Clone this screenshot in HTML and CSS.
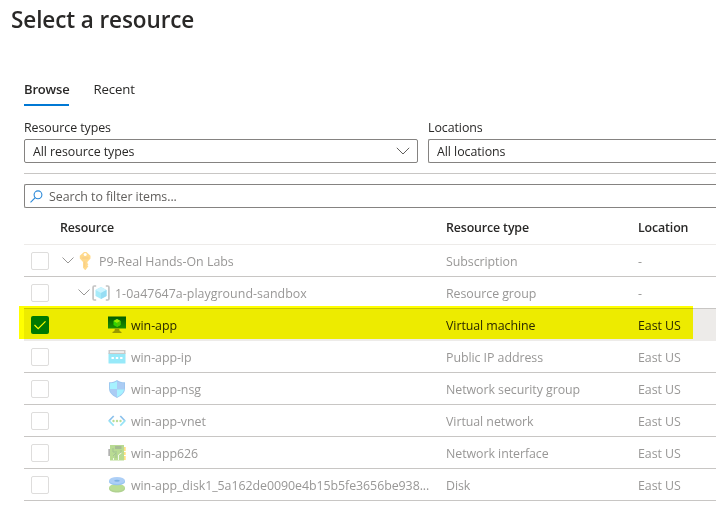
FILE: index.html
```html
<!DOCTYPE html>
<html lang="en">
<head>
<meta charset="utf-8">
<title>Select a resource</title>
<link rel="stylesheet" href="styles.css">
</head>
<body>
<main class="panel">
  <h1 class="title">Select a resource</h1>
  <nav class="tabs">
    <a class="tab active">Browse</a>
    <a class="tab">Recent</a>
  </nav>
  <section class="filters">
    <div class="field types">
      <label class="label">Resource types</label>
      <div class="select"><span>All resource types</span>
        <svg class="caret" width="14" height="8" viewBox="0 0 14 8"><path d="M.8.8 7 7 13.2.8"/></svg>
      </div>
    </div>
    <div class="field locations">
      <label class="label">Locations</label>
      <div class="select open-end"><span>All locations</span></div>
    </div>
  </section>
  <div class="search open-end">
    <svg width="13" height="13" viewBox="0 0 13 13"><circle cx="8" cy="4.800" r="3.900"/><path d="M5.200 7.700.5 12.400"/></svg>
    <span>Search to filter items...</span>
  </div>
  <section class="table">
    <div class="row head"><span></span><span>Resource</span><span>Resource type</span><span>Location</span></div>

    <div class="row dim"><i class="check"></i>
      <div class="name level-0">
        <svg class="chev" width="12" height="7" viewBox="0 0 12 7"><path d="M.5.5 6 6 11.500.5"/></svg>
        <svg class="icon" width="18" height="18" viewBox="0 0 18 18"><path fill="#ffb51a" d="M8 0h2.400l4.100 3.800v2.600L11.400 10v1.200l1 1-1 1 1 1-1 1.200L9.500 18H9l-2-2.200V10L3.800 6.400V3.800z"/><circle cx="9.200" cy="2.600" r="1.500" fill="#fff"/><path fill="#f09a10" d="M5.800 5.600h6.800v1H5.800zM8.300 9.500h.9v5.500h-.9z"/></svg>
        <span class="subscription">P9-Real Hands-On Labs</span></div>
      <span>Subscription</span><span>-</span></div>

    <div class="row dim"><i class="check"></i>
      <div class="name level-1">
        <svg class="chev" width="12" height="7" viewBox="0 0 12 7"><path d="M.5.5 6 6 11.500.5"/></svg>
        <svg class="icon" width="18" height="18" viewBox="0 0 18 18"><path fill="none" stroke="#888" stroke-width="1.700" d="M4.200 2H2.300Q1.100 2 1.100 3.200v11.600q0 1.200 1.200 1.200h1.900M13.800 2h1.900q1.200 0 1.200 1.200v11.600q0 1.200-1.200 1.200h-1.900"/><path fill="#50d8f5" d="m9 3 5.500 3v6L9 15l-5.500-3V6z"/><path fill="#9cebff" d="m9 3 5.500 3L9 9 3.500 6z"/><path fill="#32bdea" d="M9 9v6l5.500-3V6z"/></svg>
        <span class="group">1-0a47647a-playground-sandbox</span></div>
      <span>Resource group</span><span>-</span></div>

    <div class="row selected"><i class="check on"><svg width="18" height="18" viewBox="0 0 18 18"><path d="m3.500 9 3.700 3.700 7.300-7.300"/></svg></i>
      <div class="name level-2">
        <svg class="icon" width="18" height="18" viewBox="0 0 18 18"><defs><linearGradient id="screen" x2="0" y2="1"><stop stop-color="#005ba1"/><stop offset="1" stop-color="#1a90e6"/></linearGradient></defs><path fill="url(#screen)" d="M0 .5h18v12H0z"/><path fill="#32d4d5" d="m9 3 3.500 2v4L9 11 5.500 9V5z"/><path fill="#9cebff" d="m9 3 3.500 2L9 7 5.500 5z"/><path fill="#50c5e5" d="M9 7v4l3.500-2V5z"/><path fill="#999" d="M7 12.500h4q0 3 2.500 3.600v.9h-9v-.9Q7 15.500 7 12.500Z"/></svg>
        <span>win-app</span></div>
      <span>Virtual machine</span><span>East US</span></div>

    <div class="row dim"><i class="check"></i>
      <div class="name level-2">
        <svg class="icon" width="18" height="18" viewBox="0 0 18 18"><path fill="#32d4f5" d="M.5 5h17v10.500H.5z"/><path fill="#949494" d="M.5 2h17v4H.5z"/><path fill="#eee" d="M2 3.200h14v1.600H2z"/><path stroke="#fff" stroke-width="2" d="M3.500 10h2.400M7.800 10h2.400m1.900 0h2.400"/></svg>
        <span>win-app-ip</span></div>
      <span>Public IP address</span><span>East US</span></div>

    <div class="row dim"><i class="check"></i>
      <div class="name level-2">
        <svg class="icon" width="18" height="18" viewBox="0 0 18 18"><path fill="#3c8ee0" d="M9 0c2 1.700 4.500 2.200 8 2.300v6.200C17 13.500 12 16.500 9 18c-3-1.500-8-4.500-8-9.500V2.300C4.500 2.200 7 1.700 9 0Z"/><path fill="#50e6ff" d="M9 1.200v8H1.900V3.200C5.100 3 7 2.400 9 1.200ZM9 9.200h7.100c-.3 3.700-3.900 6.100-7.100 7.800z"/><path fill="#5a9bea" d="M9 1.200v8h7.100V3.200C12.900 3 11 2.400 9 1.200ZM9 9.200H1.900C2.200 12.900 5.800 15.300 9 17z"/></svg>
        <span>win-app-nsg</span></div>
      <span>Network security group</span><span>East US</span></div>

    <div class="row dim"><i class="check"></i>
      <div class="name level-2">
        <svg class="icon" width="18" height="18" viewBox="0 0 18 18"><g fill="none" stroke-width="1.700"><path stroke="#1683d9" d="M5.700 4 .9 9m11.400-5 4.800 5"/><path stroke="#32c9ee" d="m.9 8.700 4.800 5m11.400-5-4.800 5"/></g><g fill="#76bc2d"><circle cx="5.500" cy="9" r="1.200"/><circle cx="9" cy="9" r="1.200"/><circle cx="12.500" cy="9" r="1.200"/></g></svg>
        <span>win-app-vnet</span></div>
      <span>Virtual network</span><span>East US</span></div>

    <div class="row dim"><i class="check"></i>
      <div class="name level-2">
        <svg class="icon" width="18" height="18" viewBox="0 0 18 18"><path fill="#76b82a" d="M2 1h14v15.500H2z"/><path fill="#666" d="M.3 5h1.700v7H.3z"/><path fill="#527a2c" d="M7 2h6.500v3H7z"/><path fill="#ffc400" d="M16 3h1.700v4H16zm0 5h1.700v3H16zm0 4h1.700v4H16z"/><path fill="none" stroke="#4b872b" d="M5 4v4h4M5 12l3-3v5m5-8v3"/><path fill="none" stroke="#e5f2d7" d="M10.500 16v-5l3-2M5.500 16v-2"/></svg>
        <span>win-app626</span></div>
      <span>Network interface</span><span>East US</span></div>

    <div class="row dim"><i class="check"></i>
      <div class="name level-2">
        <svg class="icon" width="18" height="18" viewBox="0 0 18 18"><path fill="#63a525" d="M1 11.500h16v1c0 5.300-16 5.300-16 0z"/><ellipse cx="9" cy="11.500" rx="8" ry="3.500" fill="#76bc2d"/><path fill="#308ce0" d="M1 4.500h16v1c0 5-16 5-16 0z"/><ellipse cx="9" cy="4.500" rx="8" ry="3.500" fill="#5ea0ef"/><ellipse cx="9" cy="4.800" rx="2.800" ry="1" fill="#0068c8"/></svg>
        <span>win-app_disk1_5a162de0090e4b15b5fe3656be938...</span></div>
      <span>Disk</span><span>East US</span></div>
    <div class="marker"></div>
  </section>
</main>
</body>
</html>
```
FILE: styles.css
```css
* { box-sizing: border-box; }
body {
  margin: 0;
  background: #fff;
  color: #292827;
  font: 12.4px/18px "Open Sans", "Noto Sans", sans-serif;
  letter-spacing: -.06px;
}
svg { display: block; flex: none; }
.panel { height: 514px; padding-left: 24px; }
.title {
  margin: 0 0 0 -13px;
  padding-top: 4px;
  height: 78px;
  font-size: 22.5px;
  line-height: 32px;
  font-weight: 600;
  letter-spacing: -.1px;
}
.tabs { display: flex; gap: 24px; height: 41px; }
.tab { height: 28px; padding-top: 2px; font-size: 13.2px; letter-spacing: -.1px; }
.tab.active {
  border-bottom: 2px solid #0078d4;
  font-weight: 600;
  font-size: 13px;
  letter-spacing: -.18px;
}
.filters {
  display: flex;
  gap: 10px;
  height: 55px;
  border-bottom: 1px solid #c8c6c4;
}
.types { flex: none; width: 394px; }
.locations { flex: 1; }
.label { display: block; height: 20px; }
.select, .search {
  display: flex;
  align-items: center;
  height: 24px;
  border: 1px solid #858381;
  border-radius: 2px;
}
.select { justify-content: space-between; padding: 0 7px 0 8px; }
.select span, .search span { padding-top: 1px; }
.caret, .chev { fill: none; stroke: #605e5c; }
.search {
  margin-top: 10px;
  padding-left: 5px;
  gap: 6px;
  color: #605e5c;
}
.search svg { fill: none; stroke: #2b88d8; stroke-width: 1.1; }
.open-end { border-right: 0; border-radius: 2px 0 0 2px; }
.table { position: relative; padding-top: 5px; }
.row {
  display: grid;
  grid-template-columns: 36px 386px 192px 1fr;
  align-items: center;
  height: 32px;
  border-bottom: 1px solid #c8c6c4;
}
.row span { padding-top: 2px; }
.head {
  border-color: #edebe9;
  font-weight: 600;
  padding-bottom: 3px;
  letter-spacing: -.14px;
}
.selected { background: #edebe9; border-color: #edebe9; }
.dim { color: #989796; }
.dim .icon { opacity: .5; }
.dim .chev { stroke: #989796; }
.check {
  width: 18px;
  height: 18px;
  margin-left: 7px;
  border: 1px solid #dedddc;
  border-radius: 2px;
}
.check.on { border: 0; background: #0078d4; }
.check.on svg { fill: none; stroke: #fff; stroke-width: 1.2; }
.name { display: flex; align-items: center; white-space: nowrap; }
.level-0 { padding-left: 2px; }
.level-0 .icon { margin: 0 5px 0 2px; }
.subscription { letter-spacing: 0; }
.level-1 { padding-left: 18px; }
.level-1 .icon { margin: 0 5px 0 2px; }
.group { letter-spacing: .04px; }
.level-2 { padding-left: 48px; gap: 5px; }
.marker {
  position: absolute;
  left: -5px;
  top: 98px;
  width: 674px;
  height: 33px;
  background: #ff0;
  mix-blend-mode: multiply;
}
```
